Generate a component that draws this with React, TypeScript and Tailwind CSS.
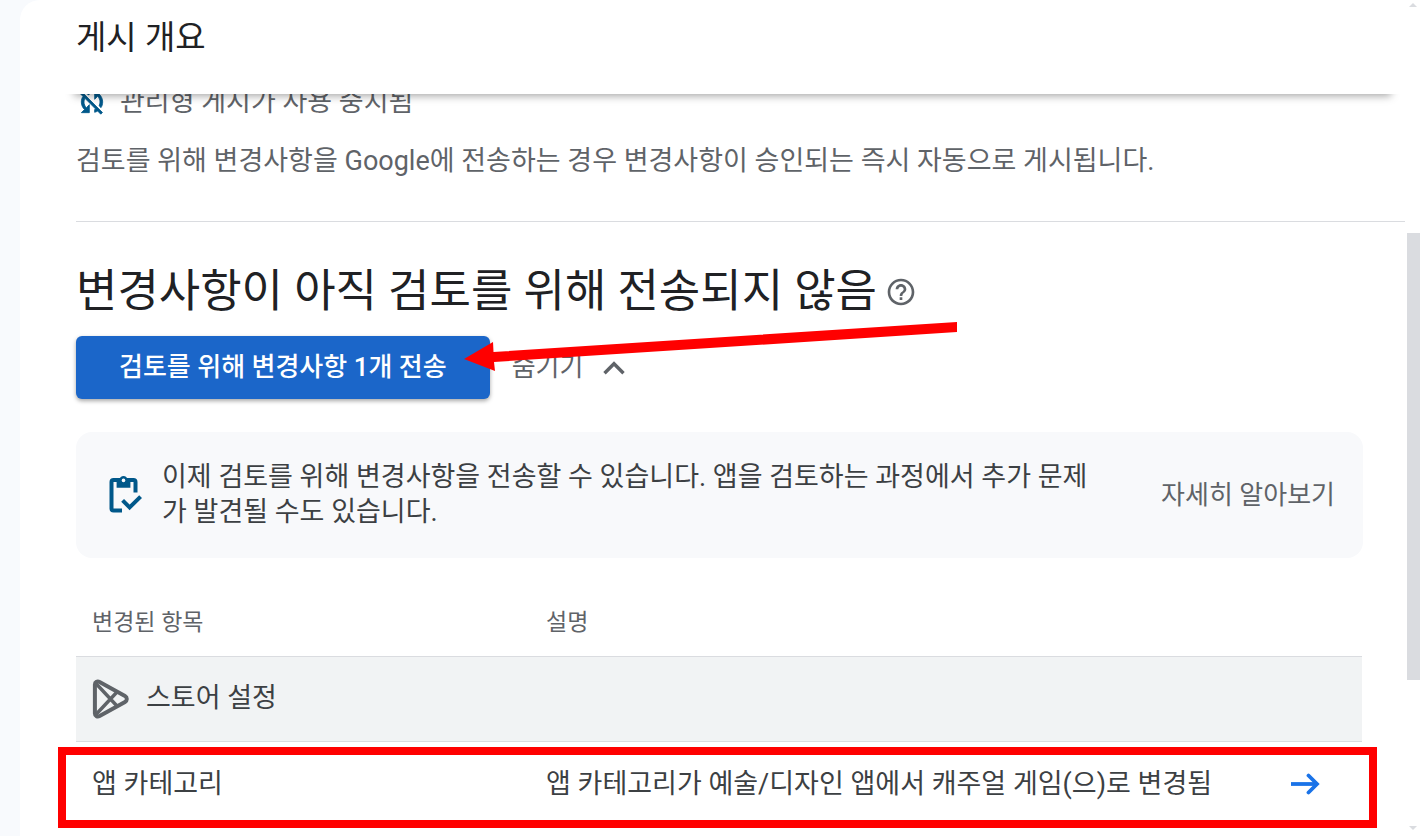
import { MdHelpOutline } from 'react-icons/md'

const changes = [
  { item: '앱 카테고리', description: '앱 카테고리가 예술/디자인 앱에서 캐주얼 게임(으)로 변경됨' },
]

function SyncDisabledIcon() {
  return (
    <svg width="32" height="32" viewBox="0 0 24 24" fill="#00588a" stroke="#00588a" strokeWidth="0.6" className="shrink-0" aria-hidden="true">
      <path d="M10 6.35V4.26c-.8.21-1.55.54-2.23.96l1.46 1.46c.25-.12.5-.24.77-.33zm-7.14-.94l2.36 2.36C4.45 8.99 4 10.44 4 12c0 2.21.91 4.2 2.36 5.64L4 20h6v-6l-2.24 2.24C6.68 15.15 6 13.66 6 12c0-1 .25-1.94.68-2.77l8.08 8.08c-.25.13-.5.25-.77.34v2.09c.8-.21 1.55-.54 2.23-.96l2.36 2.36 1.27-1.27L4.14 4.14 2.86 5.41zM20 4h-6v6l2.24-2.24C17.32 8.85 18 10.34 18 12c0 1-.25 1.94-.68 2.77l1.46 1.46C19.55 15.01 20 13.56 20 12c0-2.21-.91-4.2-2.36-5.64L20 4z" />
    </svg>
  )
}

function PlayIcon() {
  return (
    <svg width="38" height="40" viewBox="0 0 38 40" fill="none" stroke="#5f6368" strokeWidth="4" strokeLinejoin="round" className="shrink-0" aria-hidden="true">
      <path d="M2.9 5.4C2.9 2.8 5.4 1.7 7.6 2.9L33 17.1C35.4 18.5 35.4 21.5 33 22.9L7.6 37.1C5.4 38.3 2.9 37.2 2.9 34.6Z" />
      <path d="M3.5 4L25 27M3.5 36L25 13" strokeWidth="3.4" />
    </svg>
  )
}

function ClipboardCheckIcon() {
  return (
    <svg width="34" height="38" viewBox="-1 1 34 38" fill="none" stroke="#00588a" strokeWidth="4" className="shrink-0" aria-hidden="true">
      <path d="M13 35.5H4.6C3.4 35.5 2.5 34.6 2.5 33.4V7.1C2.5 5.9 3.4 5 4.6 5H24.4C25.6 5 26.5 5.9 26.5 7.1V17.5" />
      <path d="M7.6 5H10.2C10.8 2.6 12.4 1 14.5 1S18.2 2.6 18.8 5H21.4V12.8H7.6Z" fill="#00588a" stroke="none" />
      <circle cx="14.5" cy="5.4" r="1.8" fill="#f8f9fb" stroke="none" />
      <path d="M13.6 25.4L20.6 32.4L31.6 21.6" />
    </svg>
  )
}

function ChevronUpIcon() {
  return (
    <svg width="22" height="14" viewBox="0 0 22 14" fill="none" stroke="currentColor" strokeWidth="3.4" aria-hidden="true">
      <path d="M1.5 12.2L11 2.7L20.5 12.2" />
    </svg>
  )
}

function ArrowIcon() {
  return (
    <svg width="30" height="22" viewBox="0 0 30 22" fill="none" stroke="#1a73e8" strokeWidth="3.8" aria-hidden="true">
      <path d="M1 11H27" />
      <path d="M18.5 2.5L27 11L18.5 19.5" strokeLinecap="round" />
    </svg>
  )
}

function Scrollbar() {
  return (
    <div className="flex w-4 shrink-0 flex-col items-center bg-white" aria-hidden="true">
      <svg width="8" height="4" viewBox="0 0 8 4" className="mt-[3px]"><path d="M4 0L8 4H0Z" fill="#dadce0" /></svg>
      <div className="grow-[226]" />
      <div className="w-[13px] grow-[447] bg-[#dadce0]" />
      <div className="grow-[146]" />
      <svg width="8" height="4" viewBox="0 0 8 4" className="mb-[6px]"><path d="M0 0H8L4 4Z" fill="#dadce0" /></svg>
    </div>
  )
}

export default function App() {
  return (
    <div className="flex h-screen overflow-hidden bg-[#f8fafd] pl-5 font-[Roboto,'Noto_Sans_CJK_KR',sans-serif] text-[27px] text-[#3c4043]">
      <main className="min-w-0 flex-1 overflow-hidden rounded-tl-[20px] bg-white">
        <header className="relative z-10 mr-1 ml-11 flex h-[94px] items-start bg-white px-3 pt-[18px] shadow-[0_12px_8px_-10px_rgba(0,0,0,0.35)]">
          <h1 className="text-[33px] leading-10 text-[#202124]">게시 개요</h1>
        </header>

        <div className="-mt-2 pl-14">
          <div className="flex h-8 items-center gap-3 text-[#5f6368]">
            <SyncDisabledIcon />
            <p className="leading-8">관리형 게시가 사용 중지됨</p>
          </div>
          <p className="mt-[25px] leading-9 text-[#5f6368]">
            검토를 위해 변경사항을 Google에 전송하는 경우 변경사항이 승인되는 즉시 자동으로 게시됩니다.
          </p>
          <hr className="mt-[42px] border-[#dadce0]" />

          <div className="mt-[42px] flex items-center gap-2">
            <h2 className="text-[45px] leading-14 text-[#202124]">변경사항이 아직 검토를 위해 전송되지 않음</h2>
            <button aria-label="도움말" className="text-[#5f6368]">
              <MdHelpOutline size={32} />
            </button>
          </div>

          <div className="relative mt-4 flex items-center text-[26px]">
            <button className="h-[63px] rounded-md bg-[#1b66c9] px-[43px] font-medium text-white shadow-[0_2px_4px_rgba(0,0,0,0.35)]">
              검토를 위해 변경사항 1개 전송
            </button>
            <button className="ml-[22px] flex items-center gap-5 text-[#5f6368]">
              숨기기
              <ChevronUpIcon />
            </button>
            <svg width="494" height="52" viewBox="0 0 494 52" className="pointer-events-none absolute -top-4 left-[388px]" aria-hidden="true">
              <path d="M0 39L29 22L29.5 32L493 2V12L30 42L31 51Z" fill="#ff0000" />
            </svg>
          </div>

          <section className="mt-[33px] mr-[42px] flex items-center gap-5 rounded-2xl bg-[#f8f9fb] py-7 pr-7 pl-8">
            <ClipboardCheckIcon />
            <p className="flex-1 leading-[35px] break-all">
              이제 검토를 위해 변경사항을 전송할 수 있습니다. 앱을 검토하는 과정에서 추가 문제가 발견될 수도 있습니다.
            </p>
            <a href="#" className="ml-11 shrink-0 text-[26px] text-[#5f6368]">자세히 알아보기</a>
          </section>

          <div className="relative mt-8 mr-[43px]">
            <table className="w-full table-fixed border-collapse text-left">
              <thead>
                <tr className="h-[66px] border-b border-[#dadce0] text-[23px] text-[#5f6368]">
                  <th className="w-[454px] px-4 font-normal">변경된 항목</th>
                  <th className="px-4 font-normal">설명</th>
                  <td className="w-[88px]" />
                </tr>
              </thead>
              <tbody>
                <tr className="h-[85px] border-b border-[#dadce0] bg-[#f1f3f4]">
                  <td colSpan={3} className="px-4">
                    <div className="flex items-center gap-4">
                      <PlayIcon />
                      스토어 설정
                    </div>
                  </td>
                </tr>
                {changes.map((change) => (
                  <tr key={change.item} className="h-[85px]">
                    <td className="px-4">{change.item}</td>
                    <td className="px-4">{change.description}</td>
                    <td className="px-4">
                      <button aria-label="변경사항 보기" className="block"><ArrowIcon /></button>
                    </td>
                  </tr>
                ))}
              </tbody>
            </table>
            <div className="pointer-events-none absolute -right-[15px] -bottom-[2px] -left-[18px] h-[81px] border-8 border-[#ff0000]" />
          </div>
        </div>
      </main>
      <Scrollbar />
    </div>
  )
}
